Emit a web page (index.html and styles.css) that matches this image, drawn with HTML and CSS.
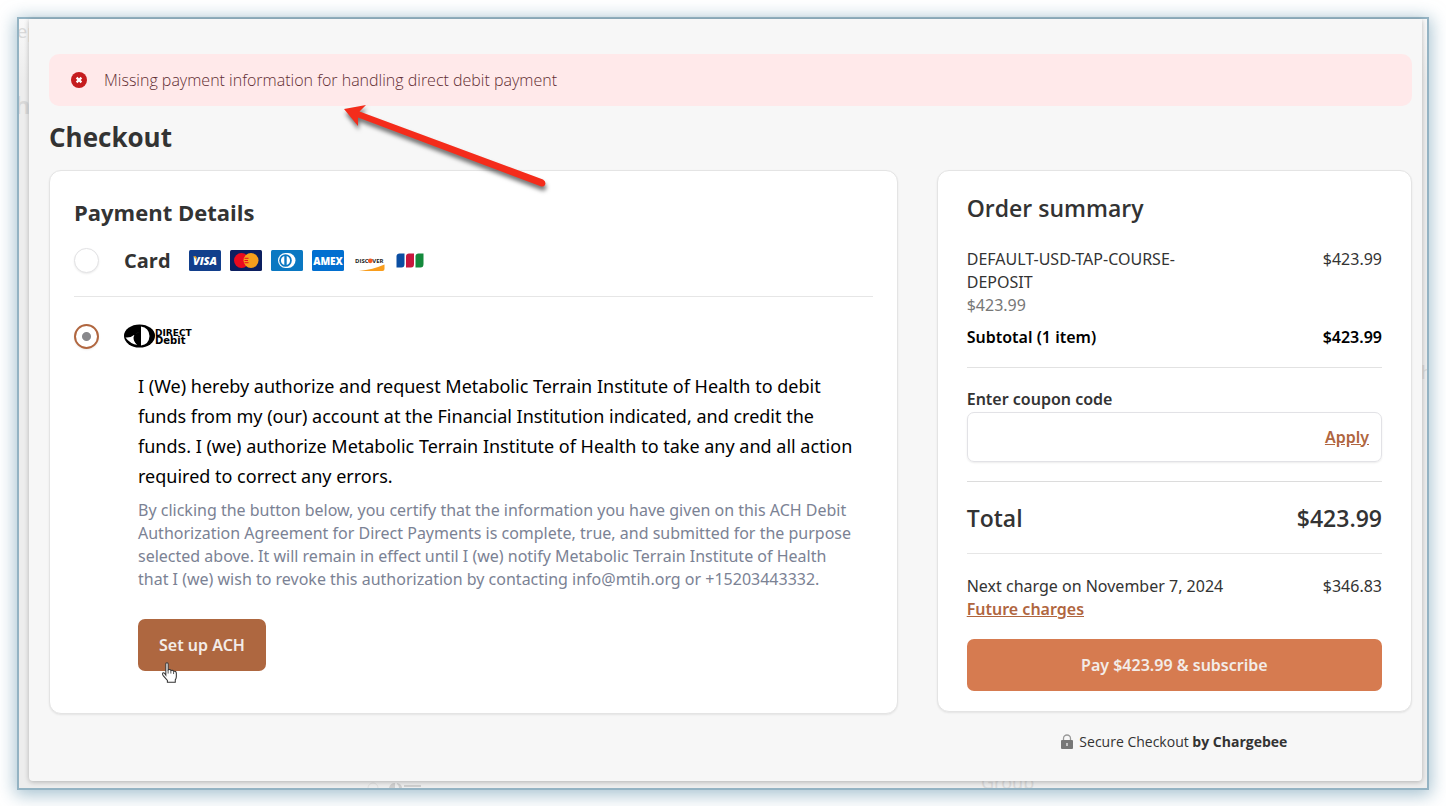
FILE: index.html
```html
<!DOCTYPE html>
<html lang="en">
<head>
    <meta charset="UTF-8">
    <meta name="viewport" content="width=device-width, initial-scale=1.0">
    <title>Checkout</title>
    <link rel="stylesheet" href="styles.css">
</head>
<body>
    <div class="frame">
        <!-- Faded page behind the dialog -->
        <div class="backdrop" aria-hidden="true">
            <span class="ghost ghost-step">ep</span>
            <span class="ghost ghost-heading">h</span>
            <span class="ghost ghost-side">h</span>
            <span class="ghost ghost-group">Group</span>
            <svg class="ghost-logo" viewBox="0 0 54 6">
                <circle cx="6" cy="6" r="5" fill="none" stroke="#dedede"/>
                <path d="M22 6q1-5 6-5v5zM30 1q5 1 5 5h-3q0-3-2-4zM37 3h17v2H37z" fill="#cfcfcf"/>
            </svg>
        </div>

        <main class="modal">
            <div class="alert" role="alert">
                <svg class="alert-icon" viewBox="0 0 16 16">
                    <circle cx="8" cy="8" r="8" fill="#c51d1f"/>
                    <path d="M5.6 5.6l4.8 4.8M10.4 5.6l-4.8 4.8" stroke="#fff" stroke-width="2.2"/>
                </svg>
                <span>Missing payment information for handling direct debit payment</span>
            </div>

            <h1>Checkout</h1>

            <div class="columns">
                <!-- Payment -->
                <section class="card payment">
                    <h2>Payment Details</h2>

                    <div class="method method-card">
                        <input type="radio" name="method" id="method-card">
                        <label for="method-card" class="method-label">Card</label>
                        <div class="brands">
                            <svg viewBox="0 0 32 21">
                                <rect width="32" height="21" rx="1.5" fill="#123f8c"/>
                                <text x="16" y="14.5" text-anchor="middle" font-size="11" font-weight="800" font-style="italic" fill="#fff">VISA</text>
                                <path d="M4 6.3h3l1.3 3.6z" fill="#f7a823"/>
                            </svg>
                            <svg viewBox="0 0 32 21">
                                <rect width="32" height="21" rx="1.5" fill="#0c1f60"/>
                                <circle cx="11.5" cy="10.5" r="7.5" fill="#eb0a1e"/>
                                <circle cx="21" cy="10.5" r="7.5" fill="#f79e1b"/>
                                <path d="M14.5 8.3h4M14.5 10.5h3.500M14.500 12.700h4" stroke="#eb0a1e" stroke-width="1"/>
                            </svg>
                            <svg viewBox="0 0 32 21">
                                <rect width="32" height="21" rx="1.5" fill="#0a78c2"/>
                                <path d="M14.5 3h2.5a7.5 7.5 0 0 1 0 15h-2.500a7.500 7.500 0 0 1 0-15z" fill="#fff"/>
                                <circle cx="14.500" cy="10.500" r="6.300" fill="#0a78c2"/>
                                <path d="M13.300 6a4.700 4.700 0 0 0 0 9zM15.700 6a4.700 4.700 0 0 1 0 9z" fill="#fff"/>
                            </svg>
                            <svg viewBox="0 0 32 21">
                                <rect width="32" height="21" rx="1.5" fill="#016fd0"/>
                                <text x="16" y="14.500" text-anchor="middle" font-size="10" font-weight="800" fill="#fff">AMEX</text>
                            </svg>
                            <svg viewBox="0 0 32 21">
                                <text x="2" y="13" font-size="6" font-weight="700" fill="#222">DISC</text>
                                <circle cx="17.300" cy="10.800" r="2.400" fill="#f15a22"/>
                                <text x="19.300" y="13" font-size="6" font-weight="700" fill="#222">VER</text>
                                <path d="M6 21Q20 19.500 31.500 14.500V19q0 2-2 2z" fill="#f99d1c"/>
                            </svg>
                            <svg viewBox="0 0 32 21">
                                <path d="M5.500 3.500H10.500V14q0 3.500-3 3.500H2.500V6.500q0-3 3-3z" fill="#0b4ea2"/>
                                <path d="M15 3.500h5V14q0 3.500-3 3.500h-5V6.500q0-3 3-3z" fill="#c8173d"/>
                                <path d="M24.500 3.500h5V14q0 3.500-3 3.500h-5V6.500q0-3 3-3z" fill="#148a3c"/>
                            </svg>
                        </div>
                    </div>

                    <div class="method method-debit">
                        <input type="radio" name="method" id="method-debit" checked>
                        <label for="method-debit">
                            <svg class="debit-logo" viewBox="0 0 70 24" role="img" aria-label="Direct Debit">
                                <ellipse cx="15.500" cy="12" rx="15.500" ry="11.500" fill="#000"/>
                                <path d="M17 2.500q8 1 8.500 9.500-.5 8.500-8.500 9.500z" fill="#fff"/>
                                <path d="M15.500 8.500q-5.500.3-6 5.300 0 4.500 4.500 7.200-8-1-12.500-7.500 5 .5 8.500-2.500 2-2.200 5.500-2.500z" fill="#fff"/>
                                <path d="M15.500 9.500v12h-1.500q-3.500-2.500-3.300-6.500.8-5 4.800-5.500z" fill="#000"/>
                                <text x="31" y="11.500" font-size="9">DIRECT</text>
                                <text x="31" y="20" font-size="10">Debit</text>
                            </svg>
                        </label>
                    </div>

                    <div class="mandate">
                        <p class="authorize">I (We) hereby authorize and request Metabolic Terrain Institute of Health to debit funds from my (our) account at the Financial Institution indicated, and credit the funds. I (we) authorize Metabolic Terrain Institute of Health to take any and all action required to correct any errors.</p>
                        <p class="certify">By clicking the button below, you certify that the information you have given on this ACH Debit Authorization Agreement for Direct Payments is complete, true, and submitted for the purpose selected above. It will remain in effect until I (we) notify Metabolic Terrain Institute of Health that I (we) wish to revoke this authorization by contacting info@mtih.org or +15203443332.</p>
                        <button type="button" class="btn btn-setup">Set up ACH</button>
                        <svg class="cursor" viewBox="0 0 16 20">
                            <path d="M4.500 12.500V2q0-1.200 1.100-1.200T6.700 2v5.500q2-.9 2.700.6 1.800-.7 2.500.8 2.300-.5 2.600 1.600v3.500q0 1.500-1 3v2.200H6v-1.700L2 13Q.8 11.200 1.600 10.500q1-.6 2 .7z" fill="#fff" stroke="#333" stroke-width="1"/>
                            <path d="M6.700 7.500V11M9.300 8.500V11M11.900 9.200V11.500" stroke="#333" stroke-width=".8" fill="none"/>
                        </svg>
                    </div>
                </section>

                <!-- Summary -->
                <div class="side">
                    <section class="card summary">
                        <h2>Order summary</h2>
                        <div class="row item">
                            <div class="item-name">
                                <div>DEFAULT-USD-TAP-COURSE-DEPOSIT</div>
                                <div class="muted">$423.99</div>
                            </div>
                            <span>$423.99</span>
                        </div>
                        <div class="row subtotal">
                            <span>Subtotal (1 item)</span>
                            <span>$423.99</span>
                        </div>
                        <div class="coupon">
                            <label for="coupon">Enter coupon code</label>
                            <div class="coupon-box">
                                <input type="text" id="coupon">
                                <button type="button" class="link">Apply</button>
                            </div>
                        </div>
                        <div class="row total">
                            <span>Total</span>
                            <span>$423.99</span>
                        </div>
                        <div class="row next">
                            <span>Next charge on November 7, 2024</span>
                            <span>$346.83</span>
                        </div>
                        <a href="#" class="link future">Future charges</a>
                        <button type="button" class="btn btn-pay">Pay $423.99 &amp; subscribe</button>
                    </section>
                    <p class="secure">
                        <svg viewBox="0 0 12 15">
                            <path d="M2.500 7V4.500a3.500 3.500 0 0 1 7 0V7" fill="none" stroke="#999" stroke-width="1.300"/>
                            <rect y="6" width="12" height="9" rx="1" fill="#777"/>
                            <path d="M6 9v3" stroke="#ddd" stroke-width="1.500"/>
                        </svg>
                        <span>Secure Checkout <strong>by Chargebee</strong></span>
                    </p>
                </div>
            </div>

            <!-- Callout arrow -->
            <svg class="arrow" viewBox="0 0 210 96">
                <path d="M4 10L26 6L19.500 12.500L203 80.500Q206.500 83 205 86Q203.500 88.500 200 87L18 18.500V27z" fill="#f42c1b"/>
            </svg>
        </main>
    </div>
</body>
</html>
```
FILE: styles.css
```css
* {
    box-sizing: border-box;
    margin: 0;
    padding: 0;
}

body {
    padding: 17px;
    background: #fff;
    color: #333;
    font-family: "Noto Sans", "Open Sans", sans-serif;
    font-size: 16px;
    line-height: 23px;
}

button, input {
    font: inherit;
}

button {
    cursor: pointer;
}

h1, h2, .alert, .total, .secure, .method-label {
    font-family: "Open Sans", "Noto Sans", sans-serif;
}

.frame {
    position: relative;
    padding: 0 5px 7px 10px;
    border: 2px solid #94b3c3;
    background: #efefef;
    box-shadow: 0 3px 16px 2px rgba(110, 155, 178, 0.6);
}

.backdrop {
    position: absolute;
    inset: 0;
    overflow: hidden;
    background: linear-gradient(#f9f9f9, #ededed 60px);
}

.ghost {
    position: absolute;
    color: #d9d9d9;
    font-size: 18px;
}

.ghost-step { left: -2px; top: 1px; }
.ghost-heading { left: -4px; top: 74px; font-size: 24px; font-weight: 600; }
.ghost-side { right: -5px; top: 342px; }
.ghost-group { left: 962px; bottom: -6px; }

.ghost-logo {
    position: absolute;
    left: 348px;
    bottom: 0;
    width: 54px;
    height: 6px;
}

.modal {
    position: relative;
    padding: 35px 10px 28px 20px;
    background: #f7f7f7;
    border-radius: 0 0 4px 4px;
    box-shadow: 0 1px 5px rgba(0, 0, 0, 0.25);
}

.alert {
    display: flex;
    align-items: center;
    gap: 17px;
    height: 52px;
    padding: 0 22px;
    border-radius: 10px;
    background: #ffe9ea;
    color: #5f2d32;
    font-weight: 300;
    font-size: 16px;
}

.alert-icon {
    width: 16px;
    height: 16px;
}

h1 {
    padding: 13px 0 15px;
    font-size: 26px;
    line-height: 36px;
    font-weight: 700;
}

.columns {
    display: grid;
    grid-template-columns: 25fr 14fr;
    gap: 39px;
    align-items: start;
}

.card {
    border: 1px solid #e4e4e4;
    border-radius: 12px;
    background: #fff;
    box-shadow: 0 1px 2px rgba(0, 0, 0, 0.08);
}

/* Payment details */
.payment {
    padding: 25px 24px 42px;
}

.payment h2 {
    font-size: 22px;
    line-height: 32px;
    font-weight: 700;
}

.method {
    display: flex;
    align-items: center;
}

.method-card {
    height: 69px;
    padding-bottom: 4px;
    border-bottom: 1px solid #e6e6e6;
}

.method-debit {
    height: 74px;
    padding-top: 4px;
}

.method input {
    appearance: none;
    width: 25px;
    height: 25px;
    margin-right: 25px;
    border: 1px solid #e2e2e4;
    border-radius: 50%;
    background: #fff;
    box-shadow: 0 1px 2px rgba(0, 0, 0, 0.08);
}

.method input:checked {
    border: 2px solid #b0663f;
    background: radial-gradient(circle, #88888c 4px, #fff 5px);
}

.method-label {
    padding-top: 2px;
    margin-right: 18px;
    font-size: 20px;
    font-weight: 700;
    line-height: 30px;
}

.brands {
    display: flex;
    gap: 9px;
}

.brands svg {
    display: block;
    width: 32px;
    height: 21px;
}

.brands text {
    font-family: "Open Sans", sans-serif;
}

.debit-logo {
    display: block;
    width: 70px;
    height: 24px;
    overflow: visible;
}

.debit-logo text {
    font-family: "DejaVu Sans", sans-serif;
    font-weight: 700;
}

.mandate {
    position: relative;
    padding: 0 18px 0 64px;
}

.authorize {
    margin-bottom: 8px;
    color: #000;
    font-size: 18px;
    line-height: 30px;
}

.certify {
    margin-bottom: 28px;
    color: #7b8294;
}

.btn {
    display: block;
    height: 52px;
    border: 0;
    border-radius: 7px;
    color: #f3ece8;
    font-weight: 600;
}

.btn-setup {
    padding: 0 21px;
    background: #ae6740;
}

.cursor {
    position: absolute;
    left: 87px;
    bottom: -12px;
    width: 17px;
    height: 21px;
}

/* Order summary */
.summary {
    padding: 21px 29px 20px;
}

.summary h2 {
    margin-bottom: 24px;
    font-size: 23px;
    font-weight: 600;
    line-height: 32px;
}

.row {
    display: flex;
    justify-content: space-between;
}

.item-name {
    width: 60%;
}

.muted {
    color: #777;
}

.subtotal {
    padding: 9px 0 18px;
    border-bottom: 1px solid #e2e2e2;
    color: #000;
    font-weight: 600;
}

.coupon {
    padding: 20px 0 19px;
    border-bottom: 1px solid #dcdcdc;
}

.coupon label {
    display: block;
    margin-bottom: 1px;
    font-weight: 600;
}

.coupon-box {
    display: flex;
    align-items: center;
    height: 50px;
    padding: 0 12px;
    border: 1px solid #e2e2e6;
    border-radius: 7px;
    box-shadow: 0 1px 2px rgba(0, 0, 0, 0.08);
}

.coupon-box input {
    flex: 1;
    min-width: 0;
    height: 100%;
    border: 0;
    outline: 0;
    background: none;
}

.link {
    border: 0;
    background: none;
    color: #b0663f;
    font-weight: 600;
    text-decoration: underline;
}

.total {
    padding: 20px 0 18px;
    border-bottom: 1px solid #e6e6e6;
    font-size: 23px;
    font-weight: 600;
    line-height: 33px;
}

.next {
    padding-top: 21px;
}

.future {
    display: block;
    width: fit-content;
    margin-bottom: 18px;
}

.btn-pay {
    width: 100%;
    background: #d67b50;
}

.secure {
    display: flex;
    justify-content: center;
    align-items: center;
    gap: 6px;
    padding-top: 18px;
    font-size: 14px;
}

.secure svg {
    width: 12px;
    height: 15px;
}

.arrow {
    position: absolute;
    left: 311px;
    top: 80px;
    width: 210px;
    height: 96px;
    overflow: visible;
    filter: drop-shadow(1px 4px 2px rgba(0, 0, 0, 0.55));
    pointer-events: none;
}
```
